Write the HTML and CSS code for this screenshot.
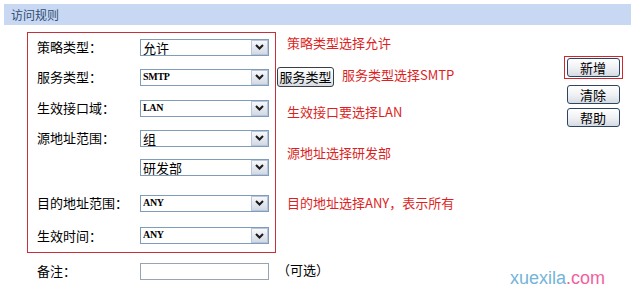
FILE: index.html
```html
<!DOCTYPE html>
<html>
<head>
<meta charset="utf-8">
<link rel="stylesheet" href="styles.css">
</head>
<body>
<div class="header">访问规则</div>
<div class="form">
  <div class="redbox"></div>

  <div class="lbl r1">策略类型：</div>
  <div class="sel r1"><span class="sel-text">允许</span><span class="sel-arrow"><svg width="9" height="6" viewBox="0 0 9 6"><path d="M1 1 L4.5 4.5 L8 1" fill="none" stroke="#1a1a1a" stroke-width="2"/></svg></span></div>
  <div class="ann r1 ann-top">策略类型选择允许</div>

  <div class="lbl r2">服务类型：</div>
  <div class="sel r2"><span class="sel-text latin">SMTP</span><span class="sel-arrow"><svg width="9" height="6" viewBox="0 0 9 6"><path d="M1 1 L4.5 4.5 L8 1" fill="none" stroke="#1a1a1a" stroke-width="2"/></svg></span></div>
  <div class="ann-row r2"><span class="btn svc">服务类型</span><span class="ann-text ann-up">服务类型选择SMTP</span></div>

  <div class="lbl r3">生效接口域：</div>
  <div class="sel r3"><span class="sel-text latin">LAN</span><span class="sel-arrow"><svg width="9" height="6" viewBox="0 0 9 6"><path d="M1 1 L4.5 4.5 L8 1" fill="none" stroke="#1a1a1a" stroke-width="2"/></svg></span></div>
  <div class="ann r3 ann-low">生效接口要选择LAN</div>

  <div class="lbl r4">源地址范围：</div>
  <div class="sel r4"><span class="sel-text">组</span><span class="sel-arrow"><svg width="9" height="6" viewBox="0 0 9 6"><path d="M1 1 L4.5 4.5 L8 1" fill="none" stroke="#1a1a1a" stroke-width="2"/></svg></span></div>
  <div class="ann r45">源地址选择研发部</div>

  <div class="sel r5"><span class="sel-text">研发部</span><span class="sel-arrow"><svg width="9" height="6" viewBox="0 0 9 6"><path d="M1 1 L4.5 4.5 L8 1" fill="none" stroke="#1a1a1a" stroke-width="2"/></svg></span></div>

  <div class="lbl r6">目的地址范围：</div>
  <div class="sel r6"><span class="sel-text latin">ANY</span><span class="sel-arrow"><svg width="9" height="6" viewBox="0 0 9 6"><path d="M1 1 L4.5 4.5 L8 1" fill="none" stroke="#1a1a1a" stroke-width="2"/></svg></span></div>
  <div class="ann r6">目的地址选择ANY，表示所有</div>

  <div class="lbl r7 last">生效时间：</div>
  <div class="sel r7 last"><span class="sel-text latin">ANY</span><span class="sel-arrow"><svg width="9" height="6" viewBox="0 0 9 6"><path d="M1 1 L4.5 4.5 L8 1" fill="none" stroke="#1a1a1a" stroke-width="2"/></svg></span></div>

  <div class="lbl r8">备注：</div>
  <div class="inp r8"></div>
  <div class="opt r8">（可选）</div>

  <div class="actions">
    <div class="hl"><span class="btn act">新增</span></div>
    <span class="btn act">清除</span>
    <span class="btn act">帮助</span>
  </div>
</div>
<div class="watermark"><span class="wm-a">xuexila</span><span class="wm-b">.com</span></div>
</body>
</html>
```

FILE: styles.css
```css
html, body {
  margin: 0;
  padding: 0;
  background: #ffffff;
}
body {
  width: 631px;
  height: 292px;
  overflow: hidden;
  position: relative;
  font-family: "Noto Sans CJK SC", "Noto Sans", sans-serif;
  font-size: 13px;
  line-height: 16px;
  color: #000;
}
.header {
  margin: 4px 0 0 4px;
  height: 21px;
  line-height: 21px;
  padding-left: 7px;
  background: #c8d8f3;
  color: #2f4c72;
  font-size: 12px;
}
.form {
  margin: 7px 8px 0 27px;
  display: grid;
  grid-template-columns: 10px 103px 129px 7px 1fr 60px;
  grid-template-rows: 30px 30px 32px 28px 30px 42px 29px 36px;
}
.redbox {
  grid-column: 1 / 5;
  grid-row: 1 / 8;
  border: 1px solid #c4313a;
}
.r1 { grid-row: 1; }
.r2 { grid-row: 2; }
.r3 { grid-row: 3; }
.r4 { grid-row: 4; }
.r5 { grid-row: 5; }
.r6 { grid-row: 6; }
.r7 { grid-row: 7; }
.r8 { grid-row: 8; }
.r45 { grid-row: 4 / 6; }
.last { margin-bottom: 6px; }

.lbl {
  grid-column: 2;
  align-self: center;
  white-space: nowrap;
}
.sel {
  grid-column: 3;
  align-self: center;
  box-sizing: border-box;
  width: 129px;
  height: 17px;
  border: 1px solid #7f9db9;
  background: #fff;
  display: flex;
  align-items: center;
}
.sel-text {
  flex: 1;
  padding-left: 2px;
  font-size: 13px;
  line-height: 15px;
  white-space: nowrap;
}
.sel-text.latin {
  font-family: "Liberation Serif", serif;
  font-size: 10px;
  font-weight: bold;
  letter-spacing: -0.3px;
  align-self: flex-start;
  line-height: 13px;
}
.sel-arrow {
  box-sizing: border-box;
  width: 17px;
  height: 15px;
  border: 1px solid #b9c5da;
  background: linear-gradient(#f7f8fb, #d3d9e4);
  display: flex;
  align-items: center;
  justify-content: center;
}
.inp {
  grid-column: 3;
  align-self: center;
  box-sizing: border-box;
  width: 129px;
  height: 17px;
  border: 1px solid #98a4b4;
  background: #fff;
}
.ann {
  grid-column: 5;
  align-self: center;
  padding-left: 11px;
  color: #dc1f1f;
  white-space: nowrap;
}
.ann-top { align-self: start; margin-top: 3px; }
.ann-low { padding-top: 8px; }
.ann-row {
  grid-column: 5;
  align-self: center;
  display: flex;
  align-items: center;
  margin-left: 1px;
  white-space: nowrap;
}
.ann-text {
  color: #dc1f1f;
  margin-left: 8px;
}
.ann-up { position: relative; top: -2px; }
.btn {
  display: flex;
  align-items: center;
  justify-content: center;
  box-sizing: border-box;
  border: 1px solid #2c4563;
  border-radius: 3px;
  background: linear-gradient(#ffffff, #eef0f3 55%, #d6dbe2);
  color: #000;
  font-size: 13px;
  white-space: nowrap;
}
.svc {
  width: 57px;
  height: 20px;
  border-color: #3a3f46;
}
.opt {
  grid-column: 5;
  align-self: center;
  padding-left: 1px;
  margin-top: -3px;
}
.actions {
  grid-column: 6;
  grid-row: 1 / 5;
  align-self: start;
  margin-top: 24px;
  display: flex;
  flex-direction: column;
  align-items: center;
  gap: 4px;
}
.hl {
  border: 1px solid #d0262c;
  padding: 1px 2px;
  margin-bottom: 2px;
}
.act {
  width: 53px;
  height: 19px;
}
.watermark {
  position: absolute;
  left: 510px;
  top: 267px;
  font-family: "Liberation Sans", Arial, sans-serif;
  font-size: 18px;
  line-height: 22px;
}
.wm-a { color: #74b4d9; }
.wm-b { color: #f2619d; }
```
